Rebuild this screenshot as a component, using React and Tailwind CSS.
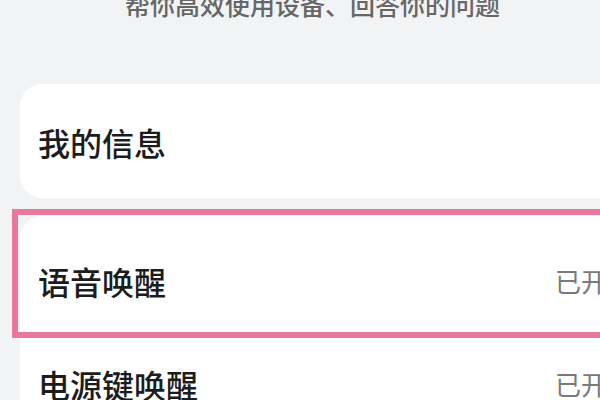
import React from "react";

const font = { fontFamily: '"Noto Sans CJK SC", "Noto Sans", sans-serif' };

const Row = ({ label, status, className }) => (
  <div className={`flex items-center justify-between pl-[18px] ${className}`}>
    <span className="text-[32px] leading-none font-medium text-[#1c1c1c] whitespace-nowrap">{label}</span>
    <span className="text-[26px] leading-none text-[#7a7a7a] whitespace-nowrap mr-[-43px]">{status}</span>
  </div>
);

export default function App() {
  return (
    <div className="w-[600px] h-[400px] overflow-hidden bg-[#f2f3f5]" style={font}>
      {/* subtitle, cut off by the top edge */}
      <p className="pl-[125px] mt-[-8px] text-[25px] leading-[25px] font-medium text-[#666666] whitespace-nowrap">
        帮你高效使用设备、回答你的问题
      </p>

      {/* my info card */}
      <div className="ml-[20px] mr-[-30px] mt-[67px] h-[114px] bg-white rounded-[22px] flex items-center pl-[18px] pt-[2px]">
        <span className="text-[32px] leading-none font-medium text-[#1c1c1c]">我的信息</span>
      </div>

      {/* wake-up settings card */}
      <div className="relative ml-[20px] mr-[-30px] mt-[18px] bg-white rounded-t-[22px]">
        <Row label="语音唤醒" status="已开启" className="h-[118px] pt-[12px] pr-[40px]" />
        <Row label="电源键唤醒" status="已开启" className="h-[100px] pr-[40px]" />

        {/* highlight frame drawn over the first row */}
        <div className="absolute left-[-8px] top-[-7px] right-[-10px] h-[129px] border-[6px] border-[#e9789d] pointer-events-none" />
      </div>
    </div>
  );
}
